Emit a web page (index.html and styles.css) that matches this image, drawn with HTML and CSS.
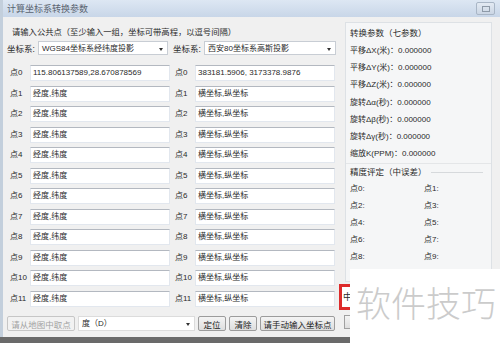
FILE: index.html
```html
<!DOCTYPE html>
<html lang="zh-CN">
  <head>
    <meta charset="utf-8">
    <title>计算坐标系转换参数</title>
    <link rel="stylesheet" href="styles.css">
  </head>
  <body>
    <div class="window">
      <div class="titlebar">
        <span class="title">计算坐标系转换参数</span>
        <span class="close"><i></i></span>
      </div>

      <div class="main">
        <div class="left">
          <div class="hint">请输入公共点（至少输入一组，坐标可带高程，以逗号间隔）</div>

          <div class="crs-row">
            <span class="lbl">坐标系:</span>
            <div class="select s-left">WGS84坐标系经纬度投影<span class="arrow"></span></div>
            <span class="lbl">坐标系:</span>
            <div class="select s-right">西安80坐标系高斯投影<span class="arrow"></span></div>
          </div>

          <!-- point rows: lon/lat on the left, x/y on the right -->
          <div class="points">
            <span class="plbl">点0</span><div class="box">115.806137589,28.670878569</div>
            <span class="plbl r">点0</span><div class="box">383181.5906, 3173378.9876</div>
            <span class="plbl">点1</span><div class="box">经度,纬度</div>
            <span class="plbl r">点1</span><div class="box">横坐标,纵坐标</div>
            <span class="plbl">点2</span><div class="box">经度,纬度</div>
            <span class="plbl r">点2</span><div class="box">横坐标,纵坐标</div>
            <span class="plbl">点3</span><div class="box">经度,纬度</div>
            <span class="plbl r">点3</span><div class="box">横坐标,纵坐标</div>
            <span class="plbl">点4</span><div class="box">经度,纬度</div>
            <span class="plbl r">点4</span><div class="box">横坐标,纵坐标</div>
            <span class="plbl">点5</span><div class="box">经度,纬度</div>
            <span class="plbl r">点5</span><div class="box">横坐标,纵坐标</div>
            <span class="plbl">点6</span><div class="box">经度,纬度</div>
            <span class="plbl r">点6</span><div class="box">横坐标,纵坐标</div>
            <span class="plbl">点7</span><div class="box">经度,纬度</div>
            <span class="plbl r">点7</span><div class="box">横坐标,纵坐标</div>
            <span class="plbl">点8</span><div class="box">经度,纬度</div>
            <span class="plbl r">点8</span><div class="box">横坐标,纵坐标</div>
            <span class="plbl">点9</span><div class="box">经度,纬度</div>
            <span class="plbl r">点9</span><div class="box">横坐标,纵坐标</div>
            <span class="plbl">点10</span><div class="box">经度,纬度</div>
            <span class="plbl r">点10</span><div class="box">横坐标,纵坐标</div>
            <span class="plbl">点11</span><div class="box">经度,纬度</div>
            <span class="plbl r">点11</span><div class="box">横坐标,纵坐标</div>
          </div>

          <div class="bottom-row">
            <button class="btn b-pick" disabled>请从地图中取点</button>
            <div class="select s-unit">度（D）<span class="arrow"></span></div>
            <button class="btn b-small">定位</button>
            <button class="btn b-small">清除</button>
            <button class="btn b-manual">请手动输入坐标点</button>
          </div>
        </div>

        <div class="right">
          <div class="group params">
            <div class="gtitle">转换参数（七参数）</div>
            <div class="pline">平移ΔX(米)：0.000000</div>
            <div class="pline">平移ΔY(米)：0.000000</div>
            <div class="pline">平移ΔZ(米)：0.000000</div>
            <div class="pline">旋转Δα(秒)：0.000000</div>
            <div class="pline">旋转Δβ(秒)：0.000000</div>
            <div class="pline">旋转Δγ(秒)：0.000000</div>
            <div class="pline">缩放K(PPM)：0.000000</div>
          </div>
          <div class="group accuracy">
            <div class="gtitle line">精度评定（中误差）</div>
            <div class="acc-grid">
              <span>点0:</span><span>点1:</span>
              <span>点2:</span><span>点3:</span>
              <span>点4:</span><span>点5:</span>
              <span>点6:</span><span>点7:</span>
              <span>点8:</span><span>点9:</span>
            </div>
          </div>
        </div>
      </div>
    </div>

    <!-- things lying over the dialog -->
    <div class="mark-red">中</div>
    <div class="mark-btn"></div>
    <div class="watermark">软件技巧</div>
  </body>
</html>
```

FILE: styles.css
```css
html, body { margin: 0; padding: 0; }
body { width: 500px; height: 343px; overflow: hidden; background: #6a6a6a; position: relative;
       font-family: "Liberation Sans", "Noto Sans CJK SC", sans-serif; font-size: 8.5px; color: #2a2a2a; }

.window { width: 497px; height: 337px; background: #f0f0f0; border-left: 3px solid #c3cfdc; }

.titlebar { height: 17px; display: flex; align-items: center; justify-content: space-between;
            background: linear-gradient(#dde7f3, #c8d6e8); padding: 0 5px 0 4px; box-sizing: border-box; }
.title { font-size: 9px; color: #5a6470; }
.close { width: 17px; height: 11px; border: 1px solid #a9b6c6; border-radius: 2px; background: linear-gradient(#e3eaf3, #cbd6e4);
         display: flex; align-items: center; justify-content: center; }
.close i { width: 6px; height: 4px; border: 1px solid #8e9aa8; display: block; }

.main { display: flex; padding-top: 8px; }
.left { width: 335px; padding-left: 4px; }

.hint { height: 14px; line-height: 14px; padding-left: 5px; font-size: 8.3px; }

.crs-row { display: flex; align-items: center; margin-top: 2px; height: 14px; }
.lbl { width: 31px; white-space: nowrap; }
.crs-row .lbl + .select { margin-right: 5px; }
.select { position: relative; height: 14px; line-height: 14px; background: #fff; border: 1px solid #c8cdd4;
          box-sizing: border-box; padding-left: 3px; font-size: 8px; white-space: nowrap; overflow: hidden; }
.s-left { width: 130px; }
.s-right { width: 132px; margin-right: 0 !important; }
.arrow { position: absolute; right: 4px; top: 6px; border-left: 2.5px solid transparent; border-right: 2.5px solid transparent;
         border-top: 3px solid #333; }

.points { display: grid; grid-template-columns: 23px 140px 25px 140px; grid-auto-rows: 16px; row-gap: 4.5px; margin-top: 10px; }
.plbl { line-height: 16px; padding-left: 3px; font-size: 8px; white-space: nowrap; }
.plbl.r { padding-left: 5px; }
.box { background: #fff; border: 1px solid #e2e7ee; border-top-color: #b3b8c0; box-sizing: border-box;
       line-height: 14px; padding-left: 2px; font-size: 8px; white-space: nowrap; overflow: hidden; }

.bottom-row { display: flex; align-items: center; margin-top: 9.5px; height: 15px; }
.btn { height: 15px; padding: 0; font: inherit; font-size: 8.5px; color: #222; border: 1px solid #9c9c9c; border-radius: 2px;
       background: linear-gradient(#f4f4f4, #dedede); box-sizing: border-box; }
.btn:disabled { color: #a2a2a2; border-color: #c6c6c6; background: #f2f2f2; }
.b-pick { width: 68px; }
.s-unit { width: 117px; height: 15px; margin-left: 3px; border-color: #dcdcdc; }
.b-small { width: 28px; margin-left: 3px; }
.b-small:first-of-type { margin-left: 4px; }
.b-manual { width: 75px; margin-left: 3px; }

.right { width: 147px; margin-left: 3px; margin-top: -3px; background: #f5f6f7; border: 1px solid #dde1e5; box-sizing: border-box;
         height: 260px; padding-left: 4px; }
.gtitle { height: 17px; line-height: 17px; margin-top: 2px; font-size: 8.5px; }
.pline { height: 17.2px; line-height: 17.2px; font-size: 8px; white-space: nowrap; }
.accuracy { margin-top: 1px; border-top: 1px solid #e4e6e8; margin-left: -4px; padding-left: 4px; }
.accuracy .gtitle { margin-top: 0; }
.gtitle.line { display: flex; align-items: center; gap: 4px; }
.gtitle.line::after { content: ""; flex: 1; height: 1px; background: #d6d9dc; margin-right: 8px; }
.acc-grid { display: grid; grid-template-columns: 74px 60px; grid-auto-rows: 16.8px; line-height: 16.8px; font-size: 8px; }

.watermark { position: absolute; left: 350px; top: 269px; width: 150px; height: 74px; background: #fff;
             font-family: "Noto Sans CJK SC", sans-serif; font-weight: 300; font-size: 35px; line-height: 1;
             color: #cbcbcb; padding: 15px 0 0 6px; box-sizing: border-box; }
.mark-red { position: absolute; left: 339px; top: 284px; width: 14px; height: 26px; border: 3px solid #dd2b2b; border-right: 0;
            background: #fff; box-sizing: border-box; font-family: "Noto Sans CJK SC", sans-serif; font-size: 9px; line-height: 20px; padding-left: 1px; }
.mark-btn { position: absolute; left: 344px; top: 315px; width: 8px; height: 14px; border: 1px solid #a0a0a0;
            background: linear-gradient(#f4f4f4, #dedede); box-sizing: border-box; }
```
